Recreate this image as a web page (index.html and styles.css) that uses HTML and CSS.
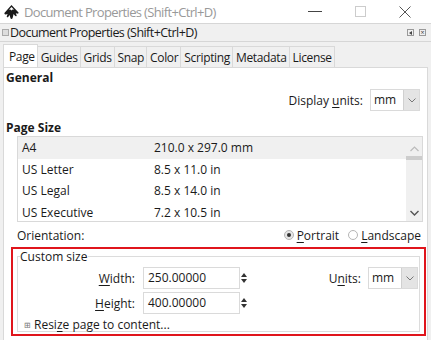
FILE: index.html
```html
<!DOCTYPE html>
<html>
<head>
<meta charset="utf-8">
<link rel="stylesheet" href="styles.css">
</head>
<body>
<div class="window">
  <div class="titlebar">
    <svg class="appicon" width="17" height="16" viewBox="0 0 17 16">
      <path d="M8.5 1 L15.5 8.5 C16 9.2 15 10 14 9.6 L12.8 9.2 L13.6 11.2 C14 12.2 12.6 12.6 12 11.8 L10.6 10 L9.6 14 C9.3 15.2 7.7 15.2 7.4 14 L6.6 11 L5.2 13 C4.6 13.8 3.4 13.2 3.8 12.2 L4.6 10 L2.8 10.4 C1.6 10.6 1 9.6 1.6 8.8 Z" fill="#1a1a1a"/>
      <path d="M8.5 3 L11 5.8 L9.6 5.4 L8.5 6.6 L7.4 5.4 L6 5.8 Z" fill="#fff"/>
    </svg>
    <span class="title">Document Properties (Shift+Ctrl+D)</span>
    <div class="controls">
      <span class="ctl min"></span>
      <span class="ctl max"></span>
      <svg class="ctl close" width="12" height="12" viewBox="0 0 12 12"><path d="M0.5 0.5 L11.5 11.5 M11.5 0.5 L0.5 11.5" stroke="#555" stroke-width="1"/></svg>
    </div>
  </div>
  <div class="dockbar">
    <span class="dockgrip"></span>
    <span class="docktitle">Document Properties (Shift+Ctrl+D)</span>
    <span class="dockbtns">
      <span class="dbtn"><span class="tri"></span></span>
      <span class="dbtn x">×</span>
    </span>
  </div>
  <div class="notebook">
    <div class="tabs">
      <span class="tab active">Page</span>
      <span class="tab">Guides</span>
      <span class="tab">Grids</span>
      <span class="tab">Snap</span>
      <span class="tab">Color</span>
      <span class="tab">Scripting</span>
      <span class="tab">Metadata</span>
      <span class="tab">License</span>
    </div>
    <div class="panel">
      <div class="heading">General</div>
      <div class="unitsrow">
        <span>Display <u>u</u>nits:</span>
        <span class="combo"><span class="cval">mm</span><span class="carrow"><svg width="8" height="5" viewBox="0 0 8 5"><path d="M0.5 0.5 L4 4 L7.5 0.5" fill="none" stroke="#777" stroke-width="1"/></svg></span></span>
      </div>
      <div class="heading ps">Page Size</div>
      <div class="listbox">
        <div class="rows">
          <div class="row sel"><span class="nm">A4</span><span>210.0 x 297.0 mm</span></div>
          <div class="row"><span class="nm">US Letter</span><span>8.5 x 11.0 in</span></div>
          <div class="row"><span class="nm">US Legal</span><span>8.5 x 14.0 in</span></div>
          <div class="row"><span class="nm">US Executive</span><span>7.2 x 10.5 in</span></div>
        </div>
        <div class="scroll">
          <svg class="sup" width="9" height="6" viewBox="0 0 9 6"><path d="M0.5 5 L4.5 1 L8.5 5" fill="none" stroke="#bbb" stroke-width="1.2"/></svg>
          <span class="thumb"></span>
          <svg class="sdown" width="9" height="6" viewBox="0 0 9 6"><path d="M0.5 1 L4.5 5 L8.5 1" fill="none" stroke="#555" stroke-width="1.4"/></svg>
        </div>
      </div>
      <div class="orient">
        <span>Orientation:</span>
        <span class="radios">
          <span class="radio on"></span><span class="rl"><u>P</u>ortrait</span>
          <span class="radio"></span><span class="rl"><u>L</u>andscape</span>
        </span>
      </div>
      <div class="highlight">
        <fieldset class="custom">
          <legend>Custom size</legend>
          <div class="grid">
            <span class="lbl"><u>W</u>idth:</span>
            <span class="spin"><span class="entry">250.00000</span><span class="arrows"><span class="up"></span><span class="dn"></span></span></span>
            <span class="ulbl">U<u>n</u>its:</span>
            <span class="combo small"><span class="cval">mm</span><span class="carrow"><svg width="8" height="5" viewBox="0 0 8 5"><path d="M0.5 0.5 L4 4 L7.5 0.5" fill="none" stroke="#777" stroke-width="1"/></svg></span></span>
            <span class="lbl"><u>H</u>eight:</span>
            <span class="spin"><span class="entry">400.00000</span><span class="arrows"><span class="up"></span><span class="dn"></span></span></span>
          </div>
          <div class="resize"><span class="plus">⊞</span>Resi<u>z</u>e page to content...</div>
        </fieldset>
      </div>
    </div>
  </div>
</div>
</body>
</html>
```
FILE: styles.css
```css
* { box-sizing: border-box; }
html, body { margin: 0; padding: 0; }
body {
  width: 431px;
  height: 340px;
  overflow: hidden;
  background: #f0f0f0;
  font-family: "Open Sans", "Noto Sans", sans-serif;
  font-size: 12px;
  color: #1a1a1a;
}
u { text-decoration: underline; text-underline-offset: 2px; }
.window { width: 431px; height: 340px; display: flex; flex-direction: column; }

.titlebar {
  height: 23px;
  background: #fff;
  display: flex;
  align-items: center;
  padding-left: 3px;
  flex-shrink: 0;
}
.appicon { margin-right: 4px; margin-top: 1px; }
.title { color: #999; font-size: 13px; letter-spacing: -0.65px; }
.controls { margin-left: auto; display: flex; align-items: center; height: 23px; }
.ctl { display: block; }
.min { width: 14px; height: 1px; background: #444; margin-right: 33px; }
.max { width: 11px; height: 11px; border: 1px solid #ccc; margin-right: 33px; }
.close { margin-right: 20px; }

.dockbar {
  height: 19px;
  border-top: 1px solid #d6d6d6;
  border-bottom: 1px solid #d6d6d6;
  display: flex;
  align-items: center;
  padding-left: 2px;
  flex-shrink: 0;
}
.dockgrip { width: 7px; height: 7px; border: 1px solid #aaa; background: #ddd; margin-right: 1px; }
.docktitle { font-size: 12.5px; letter-spacing: -0.55px; }
.dockbtns { margin-left: auto; display: flex; gap: 5px; margin-right: 5px; }
.dbtn { width: 7px; height: 7px; border: 1px solid #999; display: flex; align-items: center; justify-content: center; font-size: 7px; line-height: 1; color: #444; }
.tri { width: 0; height: 0; border-top: 2px solid transparent; border-bottom: 2px solid transparent; border-right: 3px solid #444; }

.notebook { flex: 1; display: flex; flex-direction: column; padding: 2px 3px 0 3px; }
.tabs { display: flex; height: 23px; align-items: flex-end; }
.tab {
  height: 21px;
  padding: 0 2px 0 3px;
  border: 1px solid #d9d9d9;
  border-bottom: none;
  border-left: none;
  background: #f0f0f0;
  display: flex;
  align-items: center;
  letter-spacing: -0.35px;
}
.tab.active { height: 23px; background: #fff; border-left: 1px solid #d9d9d9; padding: 0 2px 0 5px; }
.panel {
  flex: 1;
  background: #fff;
  border: 1px solid #d9d9d9;
  border-bottom: none;
  padding: 2px 1px 0 2px;
}
.heading { font-weight: bold; font-size: 12px; height: 16px; line-height: 16px; }
.ps { margin-top: 9px; }
.unitsrow { display: flex; justify-content: flex-end; align-items: center; gap: 7px; height: 22px; margin: 3px 6px 0 0; }
.combo { display: flex; width: 50px; height: 22px; border: 1px solid #dadada; background: #fff; }
.combo .cval { flex: 1; padding-left: 3px; line-height: 20px; }
.combo .carrow { width: 16px; background: #e4e4e4; border-left: 1px solid #d0d0d0; display: flex; align-items: center; justify-content: center; }

.listbox {
  margin: 0 3px 0 11px;
  height: 86px;
  border: 1px solid #d9d9d9;
  display: flex;
}
.rows { flex: 1; }
.row { height: 21.5px; display: flex; align-items: center; }
.row.sel { background: #f0f0f0; }
.row .nm { width: 136px; padding-left: 4px; }
.scroll { width: 16px; background: #f0f0f0; display: flex; flex-direction: column; align-items: center; padding-top: 9px; }
.thumb { width: 16px; height: 4px; background: #cdcdcd; margin-top: 4px; }
.sdown { margin-top: auto; margin-bottom: 5px; }

.orient { display: flex; align-items: center; height: 18px; margin: 4px 5px 0 11px; }
.radios { margin-left: auto; display: flex; align-items: center; }
.radio { width: 10px; height: 10px; border-radius: 50%; border: 1px solid #b5b5b5; margin-right: 3px; position: relative; }
.radio.on { background: #e6e6e6; }
.radio.on::after { content: ""; position: absolute; left: 2px; top: 2px; width: 4px; height: 4px; border-radius: 50%; background: #333; }
.rl { margin-right: 9px; }
.rl:last-child { margin-right: 0; }

.highlight {
  margin: 3px 0 0 5px;
  height: 89px;
  border: 2px solid #e0151c;
  padding: 0 4px 0 4px;
}
.custom {
  margin: 0;
  height: 83px;
  border: 1px solid #dcdcdc;
  padding: 0;
}
.custom legend { padding: 0 1px 0 0; margin-left: 2px; line-height: 15px; }
.grid {
  display: grid;
  grid-template-columns: 125px 106px 119px 50px;
  grid-template-rows: 22px 22px;
  row-gap: 3px;
  margin-top: 3px;
  align-items: center;
}
.lbl { text-align: right; padding-right: 8px; }
.spin { display: flex; height: 22px; }
.entry { width: 97px; border: 1px solid #dadada; padding-left: 4px; line-height: 20px; }
.arrows { width: 7px; margin-left: 1px; display: flex; flex-direction: column; justify-content: center; gap: 2px; }
.up { width: 0; height: 0; border-left: 3px solid transparent; border-right: 3px solid transparent; border-bottom: 4px solid #333; }
.dn { width: 0; height: 0; border-left: 3px solid transparent; border-right: 3px solid transparent; border-top: 4px solid #333; }
.ulbl { text-align: right; padding-right: 7px; }
.resize { margin-top: 2px; padding-left: 6px; display: flex; align-items: center; height: 16px; }
.plus { font-size: 8px; color: #777; margin-right: 3px; }
```
